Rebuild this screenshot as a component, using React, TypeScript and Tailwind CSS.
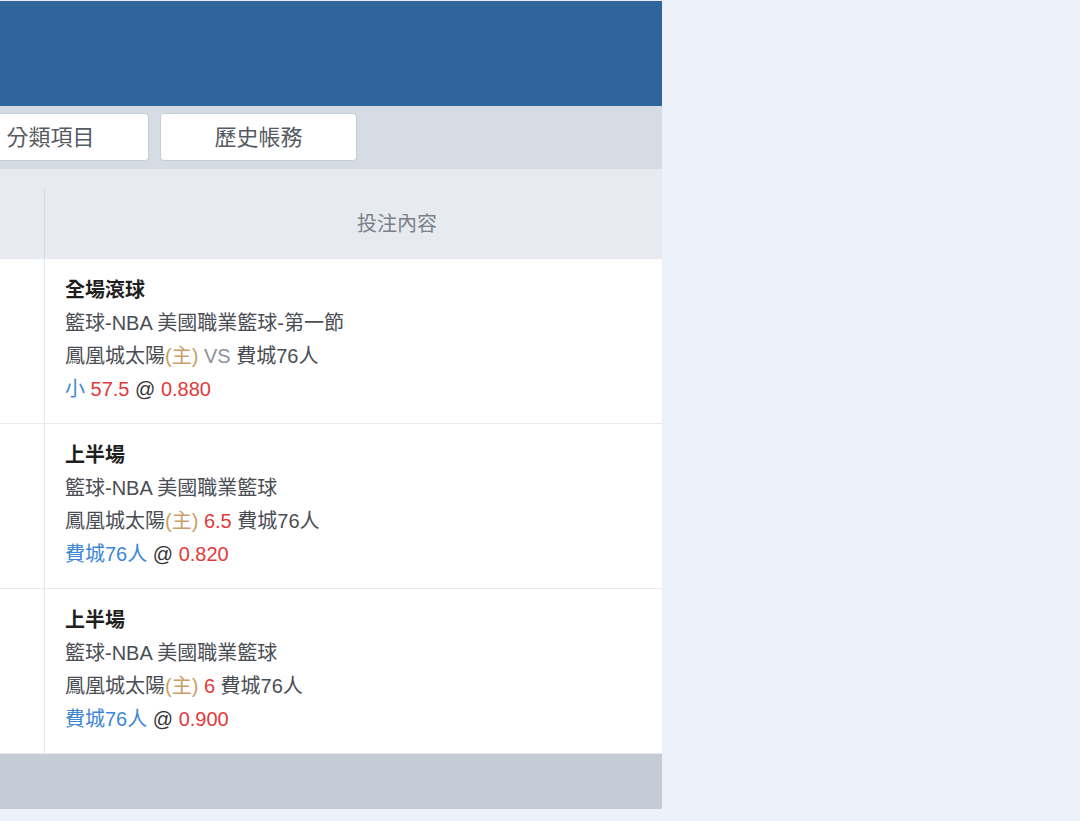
import React from "react";

const font = { fontFamily: '"Liberation Sans", "Noto Sans CJK TC", sans-serif' };

type Row = {
  title: string;
  league: string;
  mid: React.ReactNode;
  pick: React.ReactNode;
};

const rows: Row[] = [
  {
    title: "全場滾球",
    league: "籃球-NBA 美國職業籃球-第一節",
    mid: (
      <>
        鳳凰城太陽<span className="text-[#c9a066]">(主)</span>{" "}
        <span className="text-[#8d9299]">VS</span> 費城76人
      </>
    ),
    pick: (
      <>
        <span className="text-[#3d87d6]">小</span>{" "}
        <span className="text-[#e23a3a]">57.5</span>{" "}
        <span className="text-[#333]">@</span>{" "}
        <span className="text-[#e23a3a]">0.880</span>
      </>
    ),
  },
  {
    title: "上半場",
    league: "籃球-NBA 美國職業籃球",
    mid: (
      <>
        鳳凰城太陽<span className="text-[#c9a066]">(主)</span>{" "}
        <span className="text-[#e23a3a]">6.5</span> 費城76人
      </>
    ),
    pick: (
      <>
        <span className="text-[#3d87d6]">費城76人</span>{" "}
        <span className="text-[#333]">@</span>{" "}
        <span className="text-[#e23a3a]">0.820</span>
      </>
    ),
  },
  {
    title: "上半場",
    league: "籃球-NBA 美國職業籃球",
    mid: (
      <>
        鳳凰城太陽<span className="text-[#c9a066]">(主)</span>{" "}
        <span className="text-[#e23a3a]">6</span> 費城76人
      </>
    ),
    pick: (
      <>
        <span className="text-[#3d87d6]">費城76人</span>{" "}
        <span className="text-[#333]">@</span>{" "}
        <span className="text-[#e23a3a]">0.900</span>
      </>
    ),
  },
];

export default function App() {
  return (
    <div className="flex min-h-[821px] w-[1080px] bg-[#edf2fa]" style={font}>
      <div className="flex w-[662px] flex-col overflow-hidden">
        <div className="h-[106px] border-t border-[#e9eef6] bg-[#2f659c]" />
        <div className="flex h-[63px] items-start gap-[11px] bg-[#d5dce4] pt-[7px]">
          <div className="ml-[-48px] flex h-[48px] w-[197px] shrink-0 items-center justify-center rounded-[4px] border border-[#c5cdd7] bg-white text-[22px] text-[#555b63]">
            分類項目
          </div>
          <div className="flex h-[48px] w-[197px] shrink-0 items-center justify-center rounded-[4px] border border-[#c5cdd7] bg-white text-[22px] text-[#555b63]">
            歷史帳務
          </div>
        </div>
        <div className="flex h-[90px] bg-[#e7ebf0] pt-[19px]">
          <div className="w-[45px] shrink-0 border-r border-[#d6dbe1]" />
          <div className="flex flex-1 items-center pl-[312px] text-[20px] text-[#7a8089]">
            投注內容
          </div>
        </div>
        {rows.map((r, i) => (
          <div key={i} className="flex h-[165px] border-b border-[#e6e9ed] bg-white">
            <div className="w-[45px] shrink-0 border-r border-[#e3e6ea]" />
            <div className="flex flex-col pl-[20px] pt-[15px] text-[20px] leading-[33px] text-[#4a4e54]">
              <div className="font-bold text-[#1f1f1f]">{r.title}</div>
              <div>{r.league}</div>
              <div>{r.mid}</div>
              <div>{r.pick}</div>
            </div>
          </div>
        ))}
        <div className="h-[55px] bg-[#c4cdd5]" />
      </div>
      <div className="flex-1" />
    </div>
  );
}
